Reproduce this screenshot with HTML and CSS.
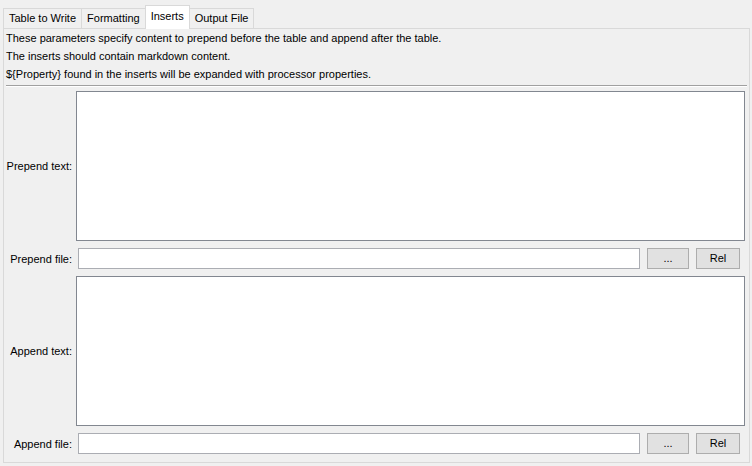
FILE: index.html
```html
<!doctype html>
<html lang="en">
<head>
    <meta charset="UTF-8">
    <title>Inserts</title>
    <link rel="stylesheet" href="styles.css">
</head>
<body>
    <div id="tabs">
        <div class="tab">Table to Write</div>
        <div class="tab">Formatting</div>
        <div class="tab selected">Inserts</div>
        <div class="tab">Output File</div>
    </div>
    <div id="panel">
        <div class="notes">
            <p>These parameters specify content to prepend before the table and append after the table.</p>
            <p>The inserts should contain markdown content.</p>
            <p>${Property} found in the inserts will be expanded with processor properties.</p>
        </div>
        <div class="sep"></div>
        <div class="form">
            <label class="lbl">Prepend text:</label>
            <div class="area"></div>
            <label class="lbl">Prepend file:</label>
            <div class="file-row">
                <div class="field"></div>
                <span class="btn dots">...</span>
                <span class="btn rel">Rel</span>
            </div>
            <label class="lbl">Append text:</label>
            <div class="area"></div>
            <label class="lbl">Append file:</label>
            <div class="file-row">
                <div class="field"></div>
                <span class="btn dots">...</span>
                <span class="btn rel">Rel</span>
            </div>
        </div>
    </div>
</body>
</html>
```
FILE: styles.css
```css
*{
    margin: 0;
    padding: 0;
    box-sizing: border-box;
}
body{
    background: #f0f0f0;
    color: #000;
    font: 11px "Liberation Sans", Arial, sans-serif;
}
/***tabs***/
#tabs{
    display: flex;
    align-items: flex-end;
    height: 28px;
    padding-left: 3px;
}
.tab{
    height: 20px;
    line-height: 18px;
    padding: 0 5px;
    border: 1px solid #d9d9d9;
    border-bottom: 0;
    margin-right: -1px;
}
.tab.selected{
    height: 24px;
    line-height: 20px;
    background: #fff;
    margin-bottom: -1px;
    position: relative;
    z-index: 1;
}
/***panel***/
#panel{
    height: 435px;
    margin: 0 2px 0 3px;
    border: 1px solid #d9d9d9;
}
.notes{
    padding-left: 2px;
}
.notes p{
    line-height: 18px;
}
.sep{
    height: 2px;
    margin: 2px 2px 0 2px;
    border-top: 1px solid #a0a0a0;
    border-bottom: 1px solid #fff;
}
.form{
    display: grid;
    grid-template-columns: 72px 1fr;
    row-gap: 7px;
    align-items: center;
    padding: 4px 4px 0 0;
}
.lbl{
    text-align: right;
    padding-right: 4px;
}
.area{
    height: 150px;
    background: #fff;
    border: 1px solid #828790;
}
.file-row{
    display: flex;
    gap: 7px;
    height: 21px;
    padding-left: 2px;
    padding-right: 5px;
}
.field{
    flex: 1;
    background: #fff;
    border: 1px solid #abadb3;
}
.btn{
    background: #e1e1e1;
    border: 1px solid #adadad;
    text-align: center;
    line-height: 19px;
}
.dots{
    width: 42px;
}
.rel{
    width: 44px;
}
```
